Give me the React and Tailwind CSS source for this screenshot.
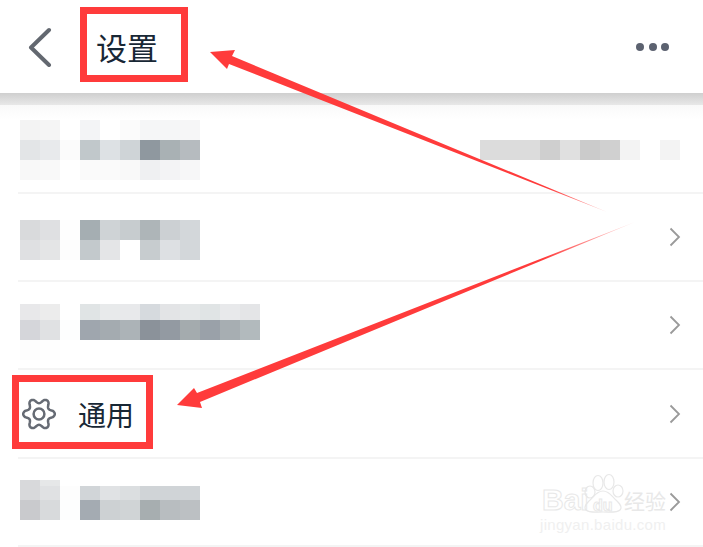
import { ChevronRight } from 'lucide-react'

const font = "font-['Noto_Sans_CJK_SC','Noto_Sans',sans-serif]"

// pixelated blocks, one array per band
const row1 = [
  { h: 'h-5', cells: ['bg-[#f3f3f3]', 'bg-[#f5f5f5]', 'bg-white', 'bg-[#f3f4f6]', 'bg-white', 'bg-[#fbfbfb]', 'bg-[#f5f6f7]', 'bg-[#f5f6f7]', 'bg-[#f6f6f7]'] },
  { h: 'h-5', cells: ['bg-[#e3e5e7]', 'bg-[#e8eaec]', 'bg-[#fbfbfb]', 'bg-[#c1c8cb]', 'bg-[#dde1e4]', 'bg-[#cfd4d7]', 'bg-[#8f989f]', 'bg-[#a9b1b4]', 'bg-[#b6bbbf]'] },
  { h: 'h-5', cells: ['bg-[#f8f8f8]', 'bg-[#f9f9f9]', 'bg-white', 'bg-[#fafafa]', 'bg-[#fafafa]', 'bg-[#f9f9f9]', 'bg-[#eff0f2]', 'bg-[#f3f3f5]', 'bg-[#f7f7f8]'] },
]
const row1Right = [
  { h: 'h-5', cells: ['bg-[#dcdcdc]', 'bg-[#dcdcdc]', 'bg-[#dcdcdc]', 'bg-[#cfcfcf]', 'bg-[#e0e0e0]', 'bg-[#cbcbcb]', 'bg-[#d0d0d0]', 'bg-[#f3f3f3]', 'bg-white', 'bg-[#f3f3f3]'] },
]
const row2 = [
  { h: 'h-5', cells: ['bg-[#d9dadc]', 'bg-[#dfe0e2]', 'bg-[#fefefe]', 'bg-[#a5aeb2]', 'bg-[#cfd3d6]', 'bg-[#c7cccf]', 'bg-[#aeb5b8]', 'bg-[#ccd0d3]', 'bg-[#d3d7da]'] },
  { h: 'h-5', cells: ['bg-[#dfe0e2]', 'bg-[#e4e5e6]', 'bg-[#fdfdfd]', 'bg-[#c3c9cc]', 'bg-[#e4e5e7]', 'bg-white', 'bg-[#c7cccf]', 'bg-[#dde0e3]', 'bg-[#d3d7da]'] },
]
const row3 = [
  { h: 'h-4', cells: ['bg-[#e8e8ea]', 'bg-[#ececec]', 'bg-white', 'bg-[#e0e4e5]', 'bg-[#e8eaeb]', 'bg-[#e8e9eb]', 'bg-[#d6dade]', 'bg-[#e3e4e6]', 'bg-[#e4e7e8]', 'bg-[#e0e4e5]', 'bg-[#e8e9eb]', 'bg-[#e4e5e7]'] },
  { h: 'h-5', cells: ['bg-[#d5d6da]', 'bg-[#e0e1e3]', 'bg-[#fdfefe]', 'bg-[#9fa6ae]', 'bg-[#a4abb0]', 'bg-[#acb3b7]', 'bg-[#8b929a]', 'bg-[#939aa2]', 'bg-[#a4abae]', 'bg-[#9aa1a9]', 'bg-[#a7aeb2]', 'bg-[#b2babd]'] },
  { h: 'h-5', cells: ['bg-[#fdfdfd]', 'bg-[#fefefe]'] },
]
const row5 = [
  { h: 'h-[6px]', cells: ['bg-[#d8d9db]', 'bg-[#e6e7e8]'] },
  { h: 'h-[14px]', cells: ['bg-[#d8d9db]', 'bg-[#e0e1e3]', 'bg-[#fdfdfd]', 'bg-[#d1d5d8]', 'bg-[#e0e2e4]', 'bg-[#dbdee0]', 'bg-[#d0d4d7]', 'bg-[#d0d4d7]', 'bg-[#d0d4d7]'] },
  { h: 'h-5', cells: ['bg-[#c9cacd]', 'bg-[#d8dadc]', 'bg-[#fdfefe]', 'bg-[#a4abb2]', 'bg-[#cdd1d3]', 'bg-[#d0d4d6]', 'bg-[#a7aeb0]', 'bg-[#b8bdc0]', 'bg-[#bcc0c3]'] },
]

function Mosaic({ bands, className }) {
  return (
    <div className={className}>
      {bands.map((band, i) => (
        <div key={i} className={`flex ${band.h}`}>
          {band.cells.map((c, j) => <div key={j} className={`w-5 ${c}`} />)}
        </div>
      ))}
    </div>
  )
}

function Chevron() {
  return (
    <svg viewBox="0 0 12 20" className="w-3 h-5 self-center ml-auto shrink-0" fill="none" stroke="#9a9a9a" strokeWidth="1.8">
      <path d="M1.5 1.5 10 10 1.5 18.5" />
    </svg>
  )
}

function gearPath() {
  const pts = []
  for (let i = 0; i < 120; i++) {
    const t = (i / 120) * Math.PI * 2
    const c = Math.cos(6 * t)
    const r = 13.3 + 2.5 * Math.sign(c) * Math.pow(Math.abs(c), 0.75)
    pts.push(`${(17 + r * Math.cos(t)).toFixed(2)} ${(17 + r * Math.sin(t)).toFixed(2)}`)
  }
  return `M${pts.join('L')}Z`
}

function Gear() {
  return (
    <svg viewBox="0 0 34 34" className="w-[34px] h-[34px] ml-1 shrink-0" fill="none" stroke="#666b74" strokeWidth="2.5" strokeLinejoin="round">
      <path d={gearPath()} />
      <circle cx="17" cy="17" r="5.4" />
    </svg>
  )
}

function Row({ h, children }) {
  return <div className={`ml-[18px] pr-[22px] flex items-start border-b-2 border-[#f4f4f4] ${h}`}>{children}</div>
}

function Arrows() {
  return (
    <svg viewBox="0 0 703 547" className="absolute inset-0 w-[703px] h-[547px]">
      <defs>
        <linearGradient id="fade" x1="177" y1="405" x2="635" y2="222" gradientUnits="userSpaceOnUse">
          <stop offset="0.8" stopColor="#ff3b3b" />
          <stop offset="1" stopColor="#ff3b3b" stopOpacity="0.15" />
        </linearGradient>
        <linearGradient id="fade2" x1="210" y1="52" x2="607" y2="212" gradientUnits="userSpaceOnUse">
          <stop offset="0.85" stopColor="#ff3b3b" />
          <stop offset="1" stopColor="#ff3b3b" stopOpacity="0.35" />
        </linearGradient>
      </defs>
      <polygon points="210,52 235,50 232,56 607,212 229,64 227,69" fill="url(#fade2)" />
      <polygon points="177,405 194,388 197,393 635,222 200,402 202,408" fill="url(#fade)" />
    </svg>
  )
}

function Watermark() {
  const outline = "font-['Liberation_Sans',sans-serif] text-transparent [-webkit-text-stroke:1px_#e8e8e8]"
  return (
    <div className="absolute left-[540px] top-[470px] w-[130px] h-[64px]">
      <svg viewBox="0 0 130 64" className="absolute inset-0 w-[130px] h-[64px]" fill="none" stroke="#e8e8e8" strokeWidth="1.2">
        <ellipse cx="50" cy="22" rx="5" ry="6" />
        <ellipse cx="58" cy="13" rx="5" ry="7.5" />
        <ellipse cx="69" cy="12" rx="5" ry="7.5" />
        <ellipse cx="78" cy="21" rx="5" ry="6" />
        <path d="M63 21c7 0 9 6 14 10 4 4 5 7 3 9-3 3-9 2-17 2s-14 1-17-2c-2-2-1-5 3-9 5-4 7-10 14-10Z" />
      </svg>
      <span className={`absolute left-[2px] top-[15px] text-[30px] leading-none font-bold ${outline}`}>Bai</span>
      <span className={`absolute left-[53px] top-[28px] text-[16px] leading-none font-bold ${outline}`}>du</span>
      <span className={`absolute left-[84px] top-[20px] text-[21px] leading-none text-[#e8e8e8] ${font}`}>经验</span>
      <span className="absolute left-0 top-[47px] text-[15px] leading-none tracking-[0.3px] text-[#f0f0f0] font-['Liberation_Sans',sans-serif]">jingyan.baidu.com</span>
    </div>
  )
}

export default function App() {
  return (
    <div className={`relative w-[703px] h-[547px] overflow-hidden bg-white ${font}`}>
      <header className="h-[93px] flex items-center pl-[26px] pr-[34px]">
        <svg viewBox="0 0 28 40" className="w-7 h-10 shrink-0" fill="none" stroke="#636870" strokeWidth="4" strokeLinecap="round" strokeLinejoin="round">
          <path d="M23 3 5 20.5 23 38" />
        </svg>
        <h1 className="ml-[42px] mb-[1px] text-[31px] leading-none font-normal text-[#182735]">设置</h1>
        <div className="ml-auto flex gap-[4.5px]">
          <span className="w-2 h-2 rounded-full bg-[#5c6270]" />
          <span className="w-2 h-2 rounded-full bg-[#5c6270]" />
          <span className="w-2 h-2 rounded-full bg-[#5c6270]" />
        </div>
      </header>
      <div className="h-3 bg-gradient-to-b from-[#cfcfcf] to-[#e8e8e8]" />

      <div className="bg-gradient-to-b from-[#f9f9f9] to-white to-[16%]">
        <Row h="h-[89px]">
          <Mosaic bands={row1} className="mt-[15px] ml-[2px]" />
          <Mosaic bands={row1Right} className="mt-[35px] ml-auto mr-px" />
        </Row>
      </div>
      <Row h="h-[88px]">
        <Mosaic bands={row2} className="mt-[26px] ml-[2px]" />
        <Chevron />
      </Row>
      <Row h="h-[88px]">
        <Mosaic bands={row3} className="mt-[22px] ml-[2px]" />
        <Chevron />
      </Row>
      <Row h="h-[89px]">
        <div className="self-center flex items-center">
          <Gear />
          <span className="ml-[22px] text-[28px] leading-none text-[#182735]">通用</span>
        </div>
        <Chevron />
      </Row>
      <Row h="h-[88px]">
        <Mosaic bands={row5} className="mt-[21px] ml-[2px]" />
        <Chevron />
      </Row>

      <Watermark />
      <div className="absolute left-[80px] top-[7px] w-[108px] h-[75px] border-[7px] border-[#ff3b3b]" />
      <div className="absolute left-[12px] top-[375px] w-[141px] h-[74px] border-[7px] border-[#ff3b3b]" />
      <Arrows />
    </div>
  )
}
